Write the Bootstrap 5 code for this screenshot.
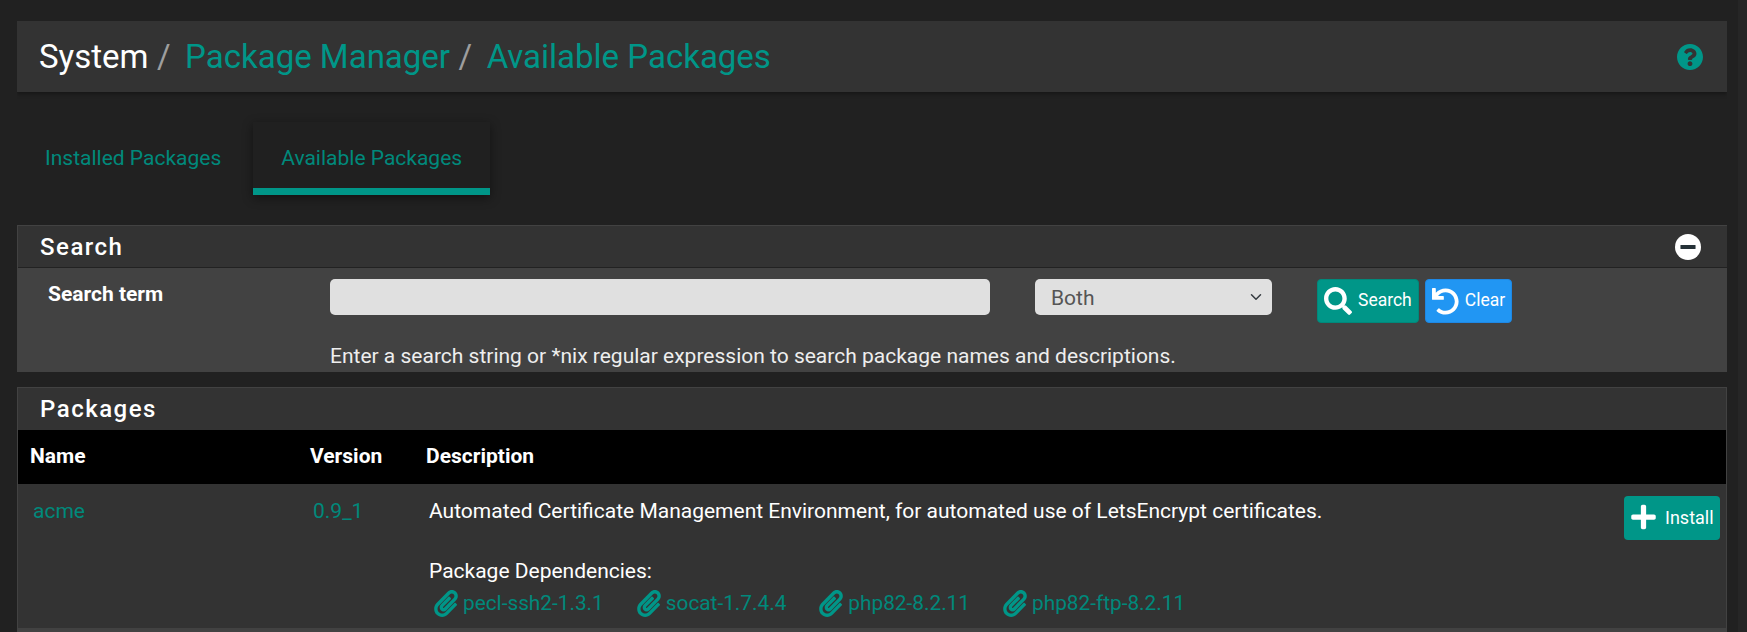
<!DOCTYPE html>
<html lang="en">
<head>
<meta charset="utf-8">
<title>Available Packages</title>
<link href="https://cdn.jsdelivr.net/npm/bootstrap@5.3.0/dist/css/bootstrap.min.css" rel="stylesheet">
<style>
html,body{height:632px;overflow:hidden;}
body{background:#212121;color:#fff;font-family:Roboto,"Liberation Sans",sans-serif;font-size:21px;}
a{color:#009688;text-decoration:none;}
.page-wrap{width:1710px;height:611px;overflow:hidden;margin-left:17px;padding-top:0;margin-top:21px;}
.crumb-bar{height:71px;background:#333;box-shadow:0 2px 4px rgba(0,0,0,.35);padding:0 23px 0 22px;}
.crumb-bar .breadcrumb{font-size:33px;line-height:1.2;}
.crumb-bar .breadcrumb-item.active{color:#fff;}
.crumb-bar .breadcrumb-item+.breadcrumb-item{padding-left:8.5px;}
.crumb-bar .breadcrumb-item+.breadcrumb-item::before{color:#9e9e9e;content:"/";padding-right:14.5px;float:none;}
.ico{fill:currentColor;flex:none;display:inline-block;}
.ico-help{width:26px;height:26px;color:#009688;margin-right:1px;}
.ico-minus{margin-right:4px;}
.tab-row{margin-top:30px;gap:4px;border:0;height:73px;}
.tab-row .nav-link{height:73px;padding:0 28px;color:#00897b;font-size:21px;border:0;border-radius:0;line-height:72px;margin:0;}
.tab-row .nav-link.active{background:#202020;color:#00897b;border-bottom:7px solid #009688;line-height:72px;box-shadow:0 3px 10px rgba(0,0,0,.45);}
.box{background:#333;border:1px solid #424242;border-radius:0;}
.box-head{background:#333;height:42px;padding:0 22px 0 22px;margin:0;border-bottom:1px solid #222;font-size:24px;font-weight:500;letter-spacing:1.5px;}
.box-head>span{margin-left:-2px;padding-left:2px;}
.box-search{margin-top:30px;height:147px;border-right:0;}
.box-search .box-body{background:#424242;height:103px;}
.label-col{width:312px;padding:12px 0 0 30px;font-weight:700;line-height:28px;}
.search-col{padding-top:11px;}
.search-input{width:660px;height:36px;background:#e0e0e0;border:0;border-radius:5px;}
.search-select{width:237px;height:36px;margin-left:45px;background-color:#e0e0e0;border:0;border-radius:5px;color:#555;font-size:21px;padding:3px 16px 0;background-position:right 8px center;}
.act-group{gap:6px;margin-left:45px;}
.act-btn{height:44px;margin:0;border:1px solid;color:#fff;border-radius:4px;font-size:17.5px;padding:0 6px 1px;gap:6px;}
.act-btn .ico{margin-top:1px;}
.act-teal{background:#009688;border-color:#00897b;}
.act-blue{background:#2196f3;border-color:#1e88e5;}
.act-btn:hover{color:#fff;}
.help-line{line-height:28px;margin-top:19px;color:#eee;}
.box-pack{margin-top:15px;}
.box-pack .box-head{border-bottom:0;}
.pack-table{margin:0;table-layout:fixed;width:100%;color:#fff;--bs-table-bg:transparent;--bs-table-color:#fff;border-color:transparent;}
.pack-table>:not(caption)>*>*{border:0;box-shadow:none;color:inherit;background:transparent;}
.pack-table thead tr{background:#000;height:54px;}
.pack-table thead th{padding:0 12px;font-weight:700;font-size:21px;vertical-align:middle;}
.col-name{width:280px;}
.col-version{width:116px;}
.col-action{width:117px;}
.pack-table tbody tr.row-a{background:#333;height:144px;}
.pack-table tbody tr.row-b{background:#424242;height:4px;}
.pack-table tbody tr.row-b td{padding:0;line-height:0;}
.pack-table tbody td{padding:14px 0 0 15px;vertical-align:top;line-height:26px;}
.pack-table a{color:#00897b;}
.pack-table .desc-gap{margin-top:34px;line-height:26px;}
.dep-list{gap:33px;line-height:32px;margin-top:3px;margin-left:5px;}
.dep-list a{gap:5px;font-size:20.8px;}
.ico-clip{width:24px;height:27px;color:#009688;}
.pack-table a.install-btn{width:96px;height:44px;background:#009688;border:0;border-radius:4px;color:#fff;font-size:18px;padding:0 7px 2px;gap:9px;margin-top:-2px;}
.track{position:fixed;top:0;right:0;width:9px;height:632px;background:#262626;}
</style>
</head>
<body>
<div class="track"></div>
<div class="page-wrap">
  <div class="crumb-bar d-flex align-items-center justify-content-between">
    <ol class="breadcrumb mb-0">
      <li class="breadcrumb-item active">System</li>
      <li class="breadcrumb-item"><a href="#">Package Manager</a></li>
      <li class="breadcrumb-item"><a href="#">Available Packages</a></li>
    </ol>
    <svg class="ico ico-help" viewBox="8 8 496 496"><path d="M504 256c0 136.997-111.043 248-248 248S8 392.997 8 256C8 119.083 119.043 8 256 8s248 111.083 248 248zM262.655 90c-54.497 0-89.255 22.957-116.549 63.758-3.536 5.286-2.353 12.415 2.715 16.258l34.699 26.31c5.205 3.947 12.621 3.008 16.665-2.122 17.864-22.658 30.113-35.797 57.303-35.797 20.429 0 45.698 13.148 45.698 32.958 0 14.976-12.363 22.667-32.534 33.976C247.128 238.528 216 254.941 216 296v4c0 6.627 5.373 12 12 12h56c6.627 0 12-5.373 12-12v-1.333c0-28.462 83.186-29.647 83.186-106.667 0-58.002-60.165-102-116.531-102zM256 338c-25.365 0-46 20.635-46 46 0 25.364 20.635 46 46 46s46-20.636 46-46c0-25.365-20.635-46-46-46z"/></svg>
  </div>

  <ul class="nav tab-row">
    <li class="nav-item"><a class="nav-link" href="#">Installed Packages</a></li>
    <li class="nav-item"><a class="nav-link active" href="#">Available Packages</a></li>
  </ul>

  <div class="box box-search">
    <div class="box-head d-flex align-items-center justify-content-between">
      <span>Search</span>
      <svg class="ico ico-minus" width="26" height="26" viewBox="8 8 496 496"><circle cx="256" cy="256" r="248" fill="#fff"/><path fill="#263238" d="M124 296c-6.6 0-12-5.4-12-12v-56c0-6.6 5.4-12 12-12h264c6.6 0 12 5.4 12 12v56c0 6.6-5.4 12-12 12H124z"/></svg>
    </div>
    <div class="box-body d-flex">
      <div class="label-col">Search term</div>
      <div class="search-col flex-grow-1">
        <div class="d-flex">
          <input class="form-control search-input" type="text" aria-label="Search term">
          <select class="form-select search-select" aria-label="Search in"><option>Both</option></select>
          <div class="d-flex act-group">
            <a class="btn act-btn act-teal d-inline-flex align-items-center" href="#"><svg class="ico" width="28" height="28" viewBox="0 0 512 512"><path d="M505 442.7L405.3 343c-4.5-4.5-10.6-7-17-7H372c27.6-35.3 44-79.7 44-128C416 93.1 322.9 0 208 0S0 93.1 0 208s93.1 208 208 208c48.3 0 92.7-16.4 128-44v16.3c0 6.4 2.5 12.5 7 17l99.7 99.7c9.4 9.4 24.6 9.4 33.9 0l28.3-28.3c9.4-9.4 9.4-24.6.1-34zM208 336c-70.7 0-128-57.2-128-128 0-70.7 57.2-128 128-128 70.7 0 128 57.2 128 128 0 70.7-57.2 128-128 128z"/></svg>Search</a>
            <a class="btn act-btn act-blue d-inline-flex align-items-center" href="#"><svg class="ico" width="27" height="27" viewBox="0 0 512 512"><path d="M212.333 224.333H12c-6.627 0-12-5.373-12-12V12C0 5.373 5.373 0 12 0h48c6.627 0 12 5.373 12 12v78.112C117.773 39.279 184.26 7.47 258.175 8.007c136.906.994 246.448 111.623 246.157 248.532C504.041 393.258 393.12 504 256.333 504c-64.089 0-122.496-24.313-166.51-64.215-5.099-4.622-5.334-12.554-.467-17.42l33.967-33.967c4.474-4.474 11.662-4.717 16.401-.525C170.76 415.336 211.58 432 256.333 432c97.268 0 176-78.716 176-176 0-97.267-78.716-176-176-176-58.496 0-110.28 28.476-142.274 72.333h98.274c6.627 0 12 5.373 12 12v48c0 6.627-5.373 12-12 12z"/></svg>Clear</a>
          </div>
        </div>
        <div class="help-line">Enter a search string or *nix regular expression to search package names and descriptions.</div>
      </div>
    </div>
  </div>

  <div class="box box-pack">
    <div class="box-head d-flex align-items-center"><span>Packages</span></div>
    <table class="table pack-table">
      <colgroup><col class="col-name"><col class="col-version"><col><col class="col-action"></colgroup>
      <thead><tr><th>Name</th><th>Version</th><th>Description</th><th></th></tr></thead>
      <tbody>
        <tr class="row-a">
          <td><a href="#">acme</a></td>
          <td><a href="#">0.9_1</a></td>
          <td>
            <div>Automated Certificate Management Environment, for automated use of LetsEncrypt certificates.</div>
            <div class="desc-gap">Package Dependencies:</div>
            <div class="dep-list d-flex">
              <a class="d-inline-flex align-items-center" href="#"><svg class="ico ico-clip" viewBox="0 0 448 512"><path d="M43.246 466.142c-58.43-60.289-57.341-157.511 1.386-217.581L254.392 34c44.316-45.332 116.351-45.336 160.671 0 43.89 44.894 43.943 117.329 0 162.276L232.214 383.128c-29.855 30.537-78.633 30.111-107.982-.998-28.275-29.97-27.368-77.473 1.452-106.953l143.743-146.835c6.182-6.314 16.312-6.422 22.626-.241l22.861 22.379c6.315 6.182 6.422 16.312.241 22.626L171.427 319.927c-4.932 5.045-5.236 13.428-.648 18.292 4.372 4.634 11.245 4.711 15.688.165l182.849-186.851c19.613-20.062 19.613-52.725-.011-72.798-19.189-19.627-49.957-19.637-69.154 0L90.39 293.295c-34.763 35.56-35.299 93.12-1.191 128.313 34.01 35.093 88.985 35.137 123.058.286l172.06-175.999c6.177-6.319 16.307-6.433 22.626-.256l22.877 22.364c6.319 6.177 6.434 16.307.256 22.626l-172.06 175.998c-59.576 60.938-155.943 60.216-214.77-.485z"/></svg>pecl-ssh2-1.3.1</a>
              <a class="d-inline-flex align-items-center" href="#"><svg class="ico ico-clip" viewBox="0 0 448 512"><path d="M43.246 466.142c-58.43-60.289-57.341-157.511 1.386-217.581L254.392 34c44.316-45.332 116.351-45.336 160.671 0 43.89 44.894 43.943 117.329 0 162.276L232.214 383.128c-29.855 30.537-78.633 30.111-107.982-.998-28.275-29.97-27.368-77.473 1.452-106.953l143.743-146.835c6.182-6.314 16.312-6.422 22.626-.241l22.861 22.379c6.315 6.182 6.422 16.312.241 22.626L171.427 319.927c-4.932 5.045-5.236 13.428-.648 18.292 4.372 4.634 11.245 4.711 15.688.165l182.849-186.851c19.613-20.062 19.613-52.725-.011-72.798-19.189-19.627-49.957-19.637-69.154 0L90.39 293.295c-34.763 35.56-35.299 93.12-1.191 128.313 34.01 35.093 88.985 35.137 123.058.286l172.06-175.999c6.177-6.319 16.307-6.433 22.626-.256l22.877 22.364c6.319 6.177 6.434 16.307.256 22.626l-172.06 175.998c-59.576 60.938-155.943 60.216-214.77-.485z"/></svg>socat-1.7.4.4</a>
              <a class="d-inline-flex align-items-center" href="#"><svg class="ico ico-clip" viewBox="0 0 448 512"><path d="M43.246 466.142c-58.43-60.289-57.341-157.511 1.386-217.581L254.392 34c44.316-45.332 116.351-45.336 160.671 0 43.89 44.894 43.943 117.329 0 162.276L232.214 383.128c-29.855 30.537-78.633 30.111-107.982-.998-28.275-29.97-27.368-77.473 1.452-106.953l143.743-146.835c6.182-6.314 16.312-6.422 22.626-.241l22.861 22.379c6.315 6.182 6.422 16.312.241 22.626L171.427 319.927c-4.932 5.045-5.236 13.428-.648 18.292 4.372 4.634 11.245 4.711 15.688.165l182.849-186.851c19.613-20.062 19.613-52.725-.011-72.798-19.189-19.627-49.957-19.637-69.154 0L90.39 293.295c-34.763 35.56-35.299 93.12-1.191 128.313 34.01 35.093 88.985 35.137 123.058.286l172.06-175.999c6.177-6.319 16.307-6.433 22.626-.256l22.877 22.364c6.319 6.177 6.434 16.307.256 22.626l-172.06 175.998c-59.576 60.938-155.943 60.216-214.77-.485z"/></svg>php82-8.2.11</a>
              <a class="d-inline-flex align-items-center" href="#"><svg class="ico ico-clip" viewBox="0 0 448 512"><path d="M43.246 466.142c-58.43-60.289-57.341-157.511 1.386-217.581L254.392 34c44.316-45.332 116.351-45.336 160.671 0 43.89 44.894 43.943 117.329 0 162.276L232.214 383.128c-29.855 30.537-78.633 30.111-107.982-.998-28.275-29.97-27.368-77.473 1.452-106.953l143.743-146.835c6.182-6.314 16.312-6.422 22.626-.241l22.861 22.379c6.315 6.182 6.422 16.312.241 22.626L171.427 319.927c-4.932 5.045-5.236 13.428-.648 18.292 4.372 4.634 11.245 4.711 15.688.165l182.849-186.851c19.613-20.062 19.613-52.725-.011-72.798-19.189-19.627-49.957-19.637-69.154 0L90.39 293.295c-34.763 35.56-35.299 93.12-1.191 128.313 34.01 35.093 88.985 35.137 123.058.286l172.06-175.999c6.177-6.319 16.307-6.433 22.626-.256l22.877 22.364c6.319 6.177 6.434 16.307.256 22.626l-172.06 175.998c-59.576 60.938-155.943 60.216-214.77-.485z"/></svg>php82-ftp-8.2.11</a>
            </div>
          </td>
          <td><a class="btn install-btn d-inline-flex align-items-center" href="#"><svg class="ico" width="25" height="28" viewBox="0 0 448 512"><path fill="#fff" d="M416 208H272V64c0-17.67-14.33-32-32-32h-32c-17.67 0-32 14.33-32 32v144H32c-17.67 0-32 14.33-32 32v32c0 17.67 14.33 32 32 32h144v144c0 17.67 14.33 32 32 32h32c17.67 0 32-14.33 32-32V304h144c17.67 0 32-14.33 32-32v-32c0-17.67-14.33-32-32-32z"/></svg><span class="text-white">Install</span></a></td>
        </tr>
        <tr class="row-b"><td colspan="4"></td></tr>
      </tbody>
    </table>
  </div>
</div>
</body>
</html>
